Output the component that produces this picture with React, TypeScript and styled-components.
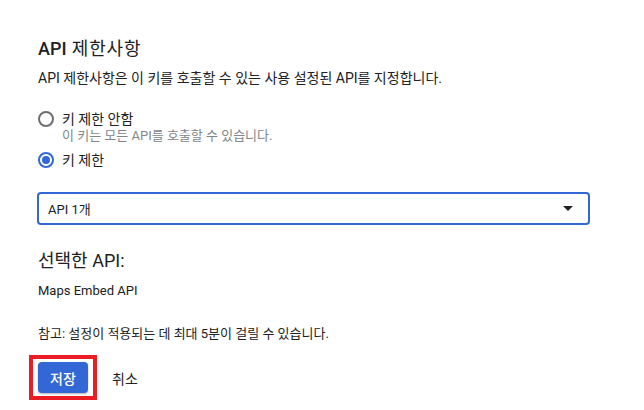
import styled, { createGlobalStyle } from 'styled-components';

const GlobalStyle = createGlobalStyle`
  html, body {
    margin: 0;
    padding: 0;
    background: #ffffff;
  }
  body {
    font-family: Roboto, 'Noto Sans CJK KR', sans-serif;
    color: #202124;
    -webkit-font-smoothing: antialiased;
  }
`;

const Page = styled.div`
  display: flex;
  flex-direction: column;
  width: 553px;
  padding: 37px 0 0 37px;
`;

const Heading = styled.h2`
  margin: 0;
  font-size: 18px;
  line-height: 24px;
  font-weight: 400;
  letter-spacing: 0.8px;
  padding-left: 1px;
`;

const Latin = styled.span`
  font-weight: 500;
  letter-spacing: 0;
`;

const Text = styled.p<{ $gap: number; $size?: number }>`
  margin: ${(p) => p.$gap}px 0 0 1px;
  font-size: ${(p) => p.$size ?? 13}px;
  line-height: 20px;
`;

const RadioGroup = styled.div`
  display: flex;
  flex-direction: column;
  margin-top: 22px;
`;

const RadioRow = styled.label<{ $gap?: number }>`
  display: grid;
  grid-template-columns: 25px 1fr;
  align-items: center;
  margin-top: ${(p) => p.$gap ?? 0}px;
  font-size: 14px;
  line-height: 18px;
`;

const RadioMark = styled.span<{ $checked?: boolean }>`
  box-sizing: border-box;
  width: 16px;
  height: 16px;
  margin-left: 1px;
  border-radius: 50%;
  border: 2px solid ${(p) => (p.$checked ? '#3367d6' : '#6e6e6e')};
  display: flex;
  align-items: center;
  justify-content: center;

  &::after {
    content: '';
    display: ${(p) => (p.$checked ? 'block' : 'none')};
    width: 8px;
    height: 8px;
    border-radius: 50%;
    background: #3367d6;
  }
`;

const Hint = styled.div`
  grid-column: 2;
  font-size: 13px;
  line-height: 16px;
  color: #80868b;
`;

const Select = styled.div`
  box-sizing: border-box;
  display: flex;
  align-items: center;
  justify-content: space-between;
  height: 33px;
  margin-top: 23px;
  padding: 0 15px 0 9px;
  border: 2px solid #3367d6;
  border-radius: 4px;
  font-size: 13px;
`;

const Caret = styled.span`
  width: 0;
  height: 0;
  border-left: 5px solid transparent;
  border-right: 5px solid transparent;
  border-top: 5px solid #202124;
`;

const SubHeading = styled.h3`
  margin: 24px 0 0 1px;
  font-size: 18px;
  line-height: 24px;
  font-weight: 400;
`;

const Actions = styled.div`
  display: flex;
  align-items: center;
  margin: 11px 0 0 -8px;
`;

const Highlight = styled.div`
  display: inline-flex;
  border: 4px solid #ec1c24;
  padding: 3px 5px;
`;

const PrimaryButton = styled.button`
  width: 50px;
  height: 31px;
  border: none;
  border-radius: 4px;
  background: #3367d6;
  color: #ffffff;
  font-family: inherit;
  font-size: 14px;
  font-weight: 500;
  box-shadow: 0 1px 2px rgba(0, 0, 0, 0.3);
  cursor: pointer;
`;

const TextButton = styled.button`
  margin-left: 15px;
  border: none;
  background: none;
  padding: 0;
  font-family: inherit;
  font-size: 14px;
  color: #202124;
  cursor: pointer;
`;

const App = () => (
  <>
    <GlobalStyle />
    <Page>
      <Heading>
        <Latin>API</Latin> 제한사항
      </Heading>
      <Text $gap={7} $size={14}>
        API 제한사항은 이 키를 호출할 수 있는 사용 설정된 API를 지정합니다.
      </Text>
      <RadioGroup>
        <RadioRow>
          <RadioMark />
          키 제한 안함
          <Hint>이 키는 모든 API를 호출할 수 있습니다.</Hint>
        </RadioRow>
        <RadioRow $gap={7}>
          <RadioMark $checked />
          키 제한
        </RadioRow>
      </RadioGroup>
      <Select>
        API 1개
        <Caret />
      </Select>
      <SubHeading>선택한 API:</SubHeading>
      <Text $gap={8}>Maps Embed API</Text>
      <Text $gap={23}>참고: 설정이 적용되는 데 최대 5분이 걸릴 수 있습니다.</Text>
      <Actions>
        <Highlight>
          <PrimaryButton>저장</PrimaryButton>
        </Highlight>
        <TextButton>취소</TextButton>
      </Actions>
    </Page>
  </>
);

export default App;
